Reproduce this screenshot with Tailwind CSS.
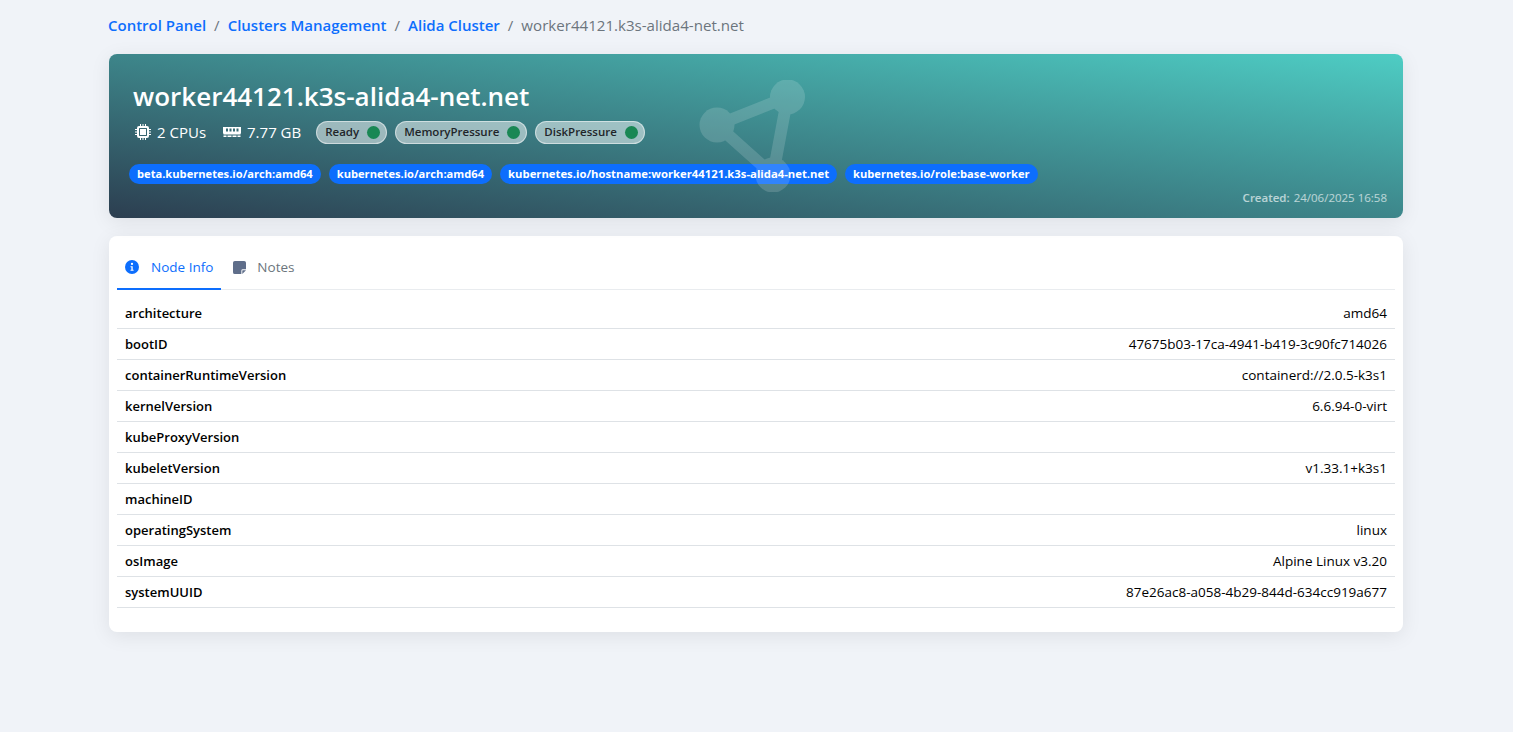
<!DOCTYPE html>
<html lang="en">
<head>
  <meta charset="UTF-8">
  <title>worker44121.k3s-alida4-net.net</title>
  <script src="https://cdn.jsdelivr.net/npm/@tailwindcss/browser@4"></script>
</head>
<body class="bg-[#f0f3f8] font-['Open_Sans',sans-serif] text-[14px] text-black overflow-hidden h-[732px] pr-px">
  <div class="w-[1296px] mx-auto">
    <!-- breadcrumb -->
    <nav class="h-[54px] pt-[13px] flex items-start text-[15px] leading-[24px]">
      <a href="#" class="text-[#0d6efd] font-semibold">Control Panel</a>
      <span class="px-2 text-[#6c757d]">/</span>
      <a href="#" class="text-[#0d6efd] font-semibold">Clusters Management</a>
      <span class="px-2 text-[#6c757d]">/</span>
      <a href="#" class="text-[#0d6efd] font-semibold">Alida Cluster</a>
      <span class="px-2 text-[#6c757d]">/</span>
      <span class="text-[#6c757d] text-[15.1px]">worker44121.k3s-alida4-net.net</span>
    </nav>

    <!-- node header -->
    <div class="relative mx-px h-[164px] rounded-lg overflow-hidden shadow-[0_4px_20px_rgba(0,0,0,0.08)] bg-[linear-gradient(to_top_right,#2c3e50,#4ecdc4)] px-6 pt-[23px] text-white">
      <h1 class="text-[26px] leading-[38px] font-semibold">worker44121.k3s-alida4-net.net</h1>
      <div class="flex items-center h-[24px] mt-[5px] text-[15px]">
        <svg class="w-4 h-4 mr-[6px] ml-[2px]" viewBox="0 0 16 16" fill="white"><path d="M5 0h1v2h1.500V0h1v2H10V0h1v2h1a2 2 0 0 1 2 2v1h2v1h-2v1.500h2v1h-2V10h2v1h-2v1a2 2 0 0 1-2 2h-1v2h-1v-2H8.500v2h-1v-2H6v2H5v-2H4a2 2 0 0 1-2-2v-1H0v-1h2V8.500H0v-1h2V6H0V5h2V4a2 2 0 0 1 2-2h1V0zm-.500 4a.500.500 0 0 0-.500.500v7c0 .3.200.500.500.500h7c.3 0 .500-.200.500-.500v-7c0-.3-.200-.500-.500-.500h-7zM5 5h6v6H5V5z"/></svg>
        <span>2 CPUs</span>
        <svg class="w-[18px] h-[14px] ml-[17px] mr-[6px]" viewBox="0 0 18 14" fill="white"><path d="M0 2h18v6.500h-.500v1H.500v-1H0V2zm3 1.500v3h2v-3H3zm3.500 0v3h2v-3h-2zm3.500 0v3h2v-3h-2zm3.500 0v3h2v-3h-2zM.500 10.500h3V12h-3v-1.500zm4 0h4V12h-4v-1.500zm5 0h4V12h-4v-1.500zm5 0h3V12h-3v-1.500z"/></svg>
        <span>7.77 GB</span>
        <div class="flex items-center gap-2 ml-[15px]">
          <span class="flex items-center h-[23px] pl-2 pr-[6px] gap-2 rounded-full border border-white/50 bg-white/50 text-[#212529] text-[11.5px] font-semibold">Ready<i class="w-[13px] h-[13px] rounded-full bg-[#198754]"></i></span>
          <span class="flex items-center h-[23px] pl-2 pr-[6px] gap-2 rounded-full border border-white/50 bg-white/50 text-[#212529] text-[11.5px] font-semibold">MemoryPressure<i class="w-[13px] h-[13px] rounded-full bg-[#198754]"></i></span>
          <span class="flex items-center h-[23px] pl-2 pr-[6px] gap-2 rounded-full border border-white/50 bg-white/50 text-[#212529] text-[11.5px] font-semibold">DiskPressure<i class="w-[13px] h-[13px] rounded-full bg-[#198754]"></i></span>
        </div>
      </div>
      <div class="flex gap-2 -ml-1 mt-[20px]">
        <span class="h-[20px] px-2 rounded-full bg-[#0d6efd] text-[11.15px] leading-[20px] font-bold">beta.kubernetes.io/arch:amd64</span>
        <span class="h-[20px] px-2 rounded-full bg-[#0d6efd] text-[11.15px] leading-[20px] font-bold">kubernetes.io/arch:amd64</span>
        <span class="h-[20px] px-2 rounded-full bg-[#0d6efd] text-[11.3px] leading-[20px] font-bold">kubernetes.io/hostname:worker44121.k3s-alida4-net.net</span>
        <span class="h-[20px] px-2 rounded-full bg-[#0d6efd] text-[11.15px] leading-[20px] font-bold">kubernetes.io/role:base-worker</span>
      </div>
      <div class="flex justify-end -mr-2 mt-[5px] text-[11.5px] leading-[18px] text-white/65"><b class="font-semibold mr-1">Created:</b> 24/06/2025 16:58</div>
      <!-- watermark -->
      <svg class="absolute left-[590px] top-[26px] w-[106px] h-[112px] opacity-15 pointer-events-none" viewBox="0 0 106 112" fill="white">
        <circle cx="18" cy="45" r="17.500"/><circle cx="88.500" cy="17" r="17.500"/><circle cx="74" cy="95" r="17.500"/>
        <path d="M18 45 88.500 17 74 95Z" fill="none" stroke="white" stroke-width="12"/>
      </svg>
    </div>

    <!-- tabs + table card -->
    <div class="mx-px mt-[18px] h-[396px] rounded-lg bg-white shadow-[0_4px_20px_rgba(0,0,0,0.08)] px-2 pt-[10px]">
      <div class="flex h-[44px] border-b border-[#e9ecef]">
        <a href="#" class="flex items-center h-[44px] px-2 border-b-2 border-[#0d6efd] text-[#0d6efd] text-[13.5px]">
          <svg class="w-[14px] h-[14px] mr-3" viewBox="0 0 16 16"><circle cx="8" cy="8" r="8" fill="#0d6efd"/><circle cx="8" cy="4.500" r="1.300" fill="white"/><path d="M6.300 7h2.500v4.200h1v1.200H6.300v-1.200h1V8.200h-1V7z" fill="white"/></svg>
          Node Info
        </a>
        <a href="#" class="flex items-center h-[44px] px-3 border-b-2 border-transparent text-[#6c757d] text-[13.5px]">
          <svg class="w-[13px] h-[13px] mr-[11px]" viewBox="0 0 14 14"><path d="M2 0h10a2 2 0 0 1 2 2v7h-3.500A1.500 1.500 0 0 0 9 10.500V14H2a2 2 0 0 1-2-2V2a2 2 0 0 1 2-2zM10 14v-3.500c0-.3.200-.500.500-.500H14l-4 4z" fill="#5f6e8a"/></svg>
          Notes
        </a>
      </div>
      <table class="w-full mt-[7px] text-[13.5px]">
        <tbody>
          <tr class="h-[31px] border-b border-[#dee2e6]"><td class="px-2 pt-[3px] text-[13px] font-semibold">architecture</td><td class="px-2 pt-px text-right">amd64</td></tr>
          <tr class="h-[31px] border-b border-[#dee2e6]"><td class="px-2 pt-[3px] text-[13px] font-semibold">bootID</td><td class="px-2 pt-px text-right">47675b03-17ca-4941-b419-3c90fc714026</td></tr>
          <tr class="h-[31px] border-b border-[#dee2e6]"><td class="px-2 pt-[3px] text-[13px] font-semibold">containerRuntimeVersion</td><td class="px-2 pt-px text-right">containerd://2.0.5-k3s1</td></tr>
          <tr class="h-[31px] border-b border-[#dee2e6]"><td class="px-2 pt-[3px] text-[13px] font-semibold">kernelVersion</td><td class="px-2 pt-px text-right">6.6.94-0-virt</td></tr>
          <tr class="h-[31px] border-b border-[#dee2e6]"><td class="px-2 pt-[3px] text-[13px] font-semibold">kubeProxyVersion</td><td class="px-2 pt-px text-right"></td></tr>
          <tr class="h-[31px] border-b border-[#dee2e6]"><td class="px-2 pt-[3px] text-[13px] font-semibold">kubeletVersion</td><td class="px-2 pt-px text-right">v1.33.1+k3s1</td></tr>
          <tr class="h-[31px] border-b border-[#dee2e6]"><td class="px-2 pt-[3px] text-[13px] font-semibold">machineID</td><td class="px-2 pt-px text-right"></td></tr>
          <tr class="h-[31px] border-b border-[#dee2e6]"><td class="px-2 pt-[3px] text-[13px] font-semibold">operatingSystem</td><td class="px-2 pt-px text-right">linux</td></tr>
          <tr class="h-[31px] border-b border-[#dee2e6]"><td class="px-2 pt-[3px] text-[13px] font-semibold">osImage</td><td class="px-2 pt-px text-right">Alpine Linux v3.20</td></tr>
          <tr class="h-[31px] border-b border-[#dee2e6]"><td class="px-2 pt-[3px] text-[13px] font-semibold">systemUUID</td><td class="px-2 pt-px text-right">87e26ac8-a058-4b29-844d-634cc919a677</td></tr>
        </tbody>
      </table>
    </div>
  </div>
</body>
</html>
